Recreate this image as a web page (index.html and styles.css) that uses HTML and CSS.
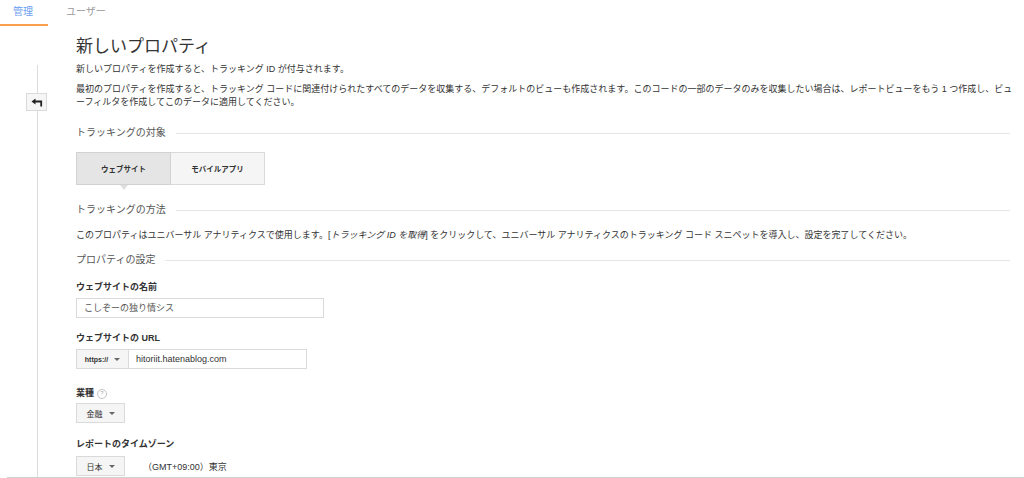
FILE: index.html
```html
<!DOCTYPE html>
<html lang="ja">
<head>
    <meta charset="UTF-8">
    <title>新しいプロパティ</title>
    <link rel="stylesheet" href="styles.css">
</head>
<body>

<div class="tabs">
    <div class="tab active">管理</div>
    <div class="tab">ユーザー</div>
</div>

<div class="page">
    <div class="rail">
        <div class="rail-line top"></div>
        <div class="back-btn">
            <svg width="12" height="9" viewBox="0 0 12 9">
                <path d="M0.5 3.5 L4.5 0.5 L4.5 6.5 Z" fill="#222"/>
                <path d="M4 3.5 H10.2 V8.5" fill="none" stroke="#222" stroke-width="1.8"/>
            </svg>
        </div>
        <div class="rail-line rest"></div>
    </div>

    <div class="content">
        <h1 class="title">新しいプロパティ</h1>
        <p class="intro">新しいプロパティを作成すると、トラッキング ID が付与されます。</p>
        <p class="desc">最初のプロパティを作成すると、トラッキング コードに関連付けられたすべてのデータを収集する、デフォルトのビューも作成されます。このコードの一部のデータのみを収集したい場合は、レポートビューをもう 1 つ作成し、ビューフィルタを作成してこのデータに適用してください。</p>

        <div class="section-head target"><span>トラッキングの対象</span></div>
        <div class="toggle">
            <div class="toggle-btn selected">ウェブサイト</div>
            <div class="toggle-btn">モバイルアプリ</div>
        </div>

        <div class="section-head method"><span>トラッキングの方法</span></div>
        <p class="method-text">このプロパティはユニバーサル アナリティクスで使用します。[<em>トラッキング ID を取得</em>] をクリックして、ユニバーサル アナリティクスのトラッキング コード スニペットを導入し、設定を完了してください。</p>

        <div class="section-head settings"><span>プロパティの設定</span></div>

        <div class="field f-name">
            <label>ウェブサイトの名前</label>
            <div class="input name-input">こしぞーの独り情シス</div>
        </div>

        <div class="field f-url">
            <label>ウェブサイトの URL</label>
            <div class="url-group">
                <div class="select proto">https:// <span class="caret"></span></div>
                <div class="input url-input">hitoriit.hatenablog.com</div>
            </div>
        </div>

        <div class="field f-industry">
            <label>業種 <span class="help">?</span></label>
            <div class="select small">金融 <span class="caret"></span></div>
        </div>

        <div class="field f-tz">
            <label>レポートのタイムゾーン</label>
            <div class="tz-row">
                <div class="select small">日本 <span class="caret"></span></div>
                <span class="tz-name">（GMT+09:00）東京</span>
            </div>
        </div>
    </div>
</div>

</body>
</html>
```

FILE: styles.css
```css
body {
    margin: 0;
    font-family: "Liberation Sans", "Noto Sans CJK JP", sans-serif;
    color: #333;
    background-color: #FFFFFF;
    overflow: hidden;
}
.tabs {
    display: flex;
    height: 28px;
    gap: 4px;
}
.tab {
    padding: 0 14px;
    font-size: 10px;
    line-height: 24px;
    color: #999;
    border-bottom: 2px solid transparent;
    height: 26px;
    box-sizing: border-box;
}
.tab.active {
    color: #6b9ef3;
    border-bottom-color: #f8a14a;
    padding: 0 15px 0 13px;
}
.page {
    display: flex;
    margin-left: 7px;
    height: 450px;
    box-sizing: border-box;
    border-bottom: 1px solid #d0d0d0;
    overflow: hidden;
}
.rail {
    width: 69px;
    flex-shrink: 0;
    display: flex;
    flex-direction: column;
    padding-top: 37px;
}
.rail-line {
    width: 1px;
    margin-left: 30px;
    background-color: #dcdcdc;
}
.rail-line.top {
    height: 28px;
}
.rail-line.rest {
    flex: 1;
}
.back-btn {
    width: 21px;
    height: 18px;
    margin-left: 19px;
    box-sizing: border-box;
    border: 1px solid #dadada;
    background-color: #f6f6f6;
    display: flex;
    align-items: center;
    justify-content: center;
}
.content {
    width: 934px;
    padding-top: 9px;
}
.title {
    font-size: 17px;
    font-weight: normal;
    line-height: 20px;
    margin: 0;
    color: #333;
}
.intro, .desc, .method-text {
    font-size: 9px;
    line-height: 13px;
    margin: 0;
    color: #333;
}
.intro {
    margin-top: 6px;
}
.desc {
    margin-top: 7px;
    margin-right: -10px;
}
.method-text em {
    font-style: italic;
}
.section-head {
    display: flex;
    align-items: center;
    gap: 10px;
    font-size: 10px;
    line-height: 14px;
    color: #555;
}
.section-head::after {
    content: "";
    flex: 1;
    height: 1px;
    background-color: #e6e6e6;
}
.section-head.target {
    margin-top: 17px;
}
.section-head.method {
    margin-top: 18px;
}
.section-head.settings {
    margin-top: 11px;
}
.toggle {
    display: flex;
    width: 189px;
    margin-top: 12px;
    margin-bottom: 18px;
}
.toggle-btn {
    position: relative;
    flex: 1;
    height: 33px;
    box-sizing: border-box;
    border: 1px solid #dadada;
    background-color: #f5f5f5;
    font-size: 7.5px;
    font-weight: bold;
    color: #333;
    display: flex;
    align-items: center;
    justify-content: center;
}
.toggle-btn + .toggle-btn {
    border-left: none;
}
.toggle-btn.selected {
    background-color: #e5e5e5;
    border-color: #d2d2d2;
}
.toggle-btn.selected::after {
    content: "";
    position: absolute;
    left: 50%;
    bottom: -6px;
    margin-left: -4px;
    border-left: 4px solid transparent;
    border-right: 4px solid transparent;
    border-top: 5px solid #dedede;
}
.method-text {
    margin-top: 12px;
}
.field label {
    display: flex;
    align-items: center;
    gap: 3px;
    font-size: 9px;
    font-weight: bold;
    line-height: 13px;
    color: #333;
    margin-bottom: 4px;
}
.f-name {
    margin-top: 14px;
}
.f-url {
    margin-top: 14px;
}
.f-industry {
    margin-top: 18px;
}
.f-industry label {
    margin-bottom: 3px;
}
.f-tz {
    margin-top: 15px;
}
.f-tz label {
    margin-bottom: 5px;
}
.help {
    display: inline-flex;
    align-items: center;
    justify-content: center;
    width: 8px;
    height: 8px;
    border: 1px solid #c4c4c4;
    border-radius: 50%;
    font-size: 6px;
    font-weight: normal;
    color: #aaa;
}
.input {
    height: 20px;
    box-sizing: border-box;
    border: 1px solid #dadada;
    background-color: #FFFFFF;
    font-size: 9px;
    line-height: 18px;
    color: #444;
    padding-left: 7px;
}
.name-input {
    width: 248px;
    color: #555;
}
.url-group {
    display: flex;
}
.url-input {
    width: 178px;
    border-left: none;
    color: #333;
}
.select {
    height: 20px;
    box-sizing: border-box;
    border: 1px solid #dadada;
    background-color: #f5f5f5;
    font-size: 8px;
    color: #333;
    display: flex;
    align-items: center;
    justify-content: center;
    gap: 6px;
}
.select.proto {
    width: 53px;
    font-size: 7px;
    font-weight: bold;
}
.select.small {
    width: 49px;
}
.caret {
    width: 0;
    height: 0;
    border-left: 3px solid transparent;
    border-right: 3px solid transparent;
    border-top: 3px solid #666;
}
.tz-row {
    display: flex;
    align-items: center;
    gap: 18px;
}
.tz-name {
    font-size: 9px;
    color: #333;
}
```
